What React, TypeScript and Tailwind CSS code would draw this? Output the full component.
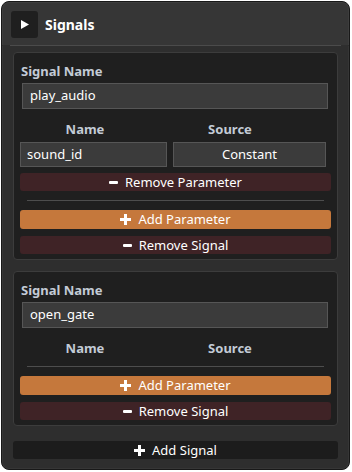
import React from "react";

const font = { fontFamily: '"Noto Sans", "Open Sans", sans-serif' };

function Minus() {
  return <span className="inline-block w-[9px] h-[3px] bg-white rounded-[1px]" />;
}
function Plus() {
  return (
    <svg width="11" height="11" viewBox="0 0 11 11">
      <rect x="4" y="0" width="3" height="11" fill="white" />
      <rect x="0" y="4" width="11" height="3" fill="white" />
    </svg>
  );
}

function Btn({ kind, icon, label, mt }: { kind: "add" | "rem" | "dark"; icon: "plus" | "minus"; label: string; mt: string }) {
  const bg = kind === "add" ? "bg-[#c5783c] h-[19px]" : kind === "rem" ? "bg-[#3f2326] h-[18px]" : "bg-[#1c1c1c] h-[18px]";
  return (
    <div className={`${bg} ${mt} rounded-[3px] flex items-center justify-center gap-[7px] text-white text-[13px] leading-none`}>
      {icon === "plus" ? <Plus /> : <Minus />}
      <span>{label}</span>
    </div>
  );
}

function Card({ name, params, mt }: { name: string; params: { n: string; s: string }[]; mt: string }) {
  return (
    <div className={`${mt} border border-[#3c3c3c] bg-[#1f1f1f] rounded-[4px] px-[6px] pt-[8px] pb-[5px]`}>
      <div className="h-[20px] leading-[20px] text-[13px] font-bold text-[#c3cbd6] pl-[1px]">Signal Name</div>
      <div className="mt-[2px] ml-[2px] mr-[3px] h-[26px] bg-[#3b3b3b] border border-[#565656] flex items-center pl-[7px] text-[13px] text-white">
        {name}
      </div>
      <div className="mt-[10px] h-[20px] flex text-[13px] font-bold text-[#c3cbd6] leading-[20px]">
        <div className="w-[130px] text-center">Name</div>
        <div className="w-[160px] text-center">Source</div>
      </div>
      {params.map((p) => (
        <React.Fragment key={p.n}>
          <div className="mt-[3px] h-[25px] flex gap-[6px] mr-[5px]">
            <div className="w-[147px] bg-[#3b3b3b] border border-[#565656] flex items-center pl-[6px] text-[13px] text-white">{p.n}</div>
            <div className="flex-1 bg-[#3b3b3b] border border-[#565656] flex items-center justify-center text-[13px] text-white">{p.s}</div>
          </div>
          <Btn kind="rem" icon="minus" label="Remove Parameter" mt="mt-[6px]" />
        </React.Fragment>
      ))}
      <div className={`${params.length ? "mt-[9px]" : "mt-[8px]"} mx-[7px] h-px bg-[#4d4d4d]`} />
      <Btn kind="add" icon="plus" label="Add Parameter" mt="mt-[9px]" />
      <Btn kind="rem" icon="minus" label="Remove Signal" mt="mt-[7px]" />
    </div>
  );
}

export default function App() {
  return (
    <div className="w-[352px] h-[472px] bg-white p-[1px]" style={font}>
      <div className="w-[349px] h-[469px] rounded-[8px] border border-[#181818] bg-[#2e2e2e] overflow-hidden flex flex-col">
        <div className="bg-[#363636] h-[43px] flex items-center pl-[8px] gap-[7px] border-t border-l border-r border-[#3e3e3e] rounded-t-[7px]">
          <div className="w-[27px] h-[27px] bg-[#1f1f1f] rounded-[3px] flex items-center justify-center">
            <svg width="8" height="9" viewBox="0 0 8 9">
              <path d="M0 0 L8 4.5 L0 9 Z" fill="white" />
            </svg>
          </div>
          <span className="text-white font-bold text-[14px]">Signals</span>
        </div>
        <div className="mx-[8px] h-px bg-[#4b4b4b]" />
        <div className="px-[10px] pt-[6px] flex-1 border-l border-r border-b border-[#363636] rounded-b-[7px]">
          <Card name="play_audio" params={[{ n: "sound_id", s: "Constant" }]} mt="mt-0" />
          <Card name="open_gate" params={[]} mt="mt-[11px]" />
          <Btn kind="dark" icon="plus" label="Add Signal" mt="mt-[15px]" />
        </div>
      </div>
    </div>
  );
}
